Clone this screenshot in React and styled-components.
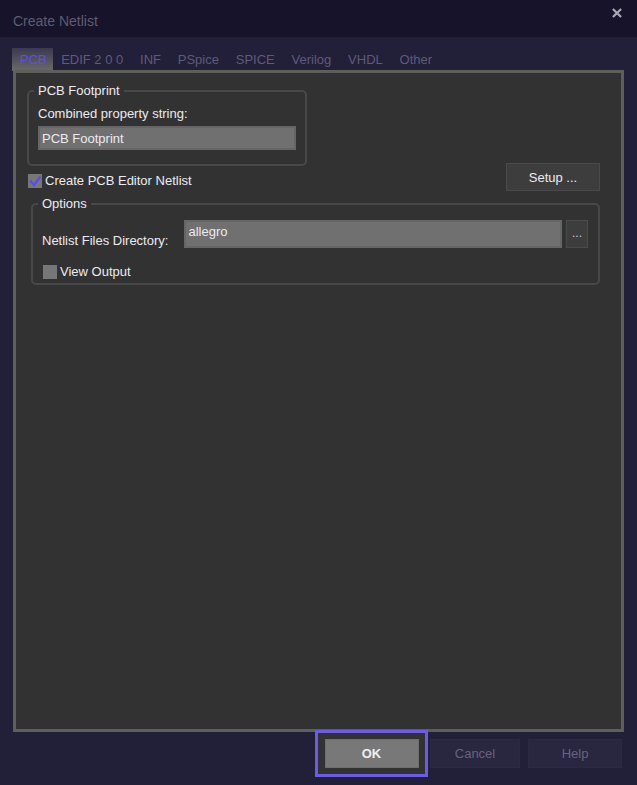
import styled, { createGlobalStyle } from "styled-components";

const GlobalStyle = createGlobalStyle`
  html, body {
    margin: 0;
    padding: 0;
    background: #221f38;
  }
  * {
    box-sizing: border-box;
  }
`;

const Dialog = styled.div`
  width: 637px;
  height: 785px;
  display: flex;
  flex-direction: column;
  background: #221f38;
  font-family: "Liberation Sans", Arial, sans-serif;
  font-size: 13px;
  color: #e4e2ea;
  overflow: hidden;
`;

const TitleBar = styled.div`
  height: 37px;
  flex: none;
  display: flex;
  justify-content: space-between;
  padding: 13px 15px 0 13px;
  background: #16132b;
  color: #5f5b72;
  font-size: 14px;
`;

const Close = styled.svg`
  width: 10px;
  height: 10px;
  margin-top: -5px;
  stroke: #a9a8b3;
  stroke-width: 2.4;
`;

const TabRow = styled.div`
  height: 34px;
  flex: none;
  display: flex;
  align-items: flex-end;
  padding: 11px 0 0 12px;
  margin-bottom: -1px;
`;

const Tab = styled.div`
  height: 23px;
  padding: ${(p) => (p.$active ? "4px 6px 0 8px" : "4px 8.4px 0")};
  color: ${(p) => (p.$active ? "#5b4fe8" : "#5f5a7d")};
  background: ${(p) => (p.$active ? "linear-gradient(#3b3950, #6a6a68)" : "transparent")};
  white-space: nowrap;
`;

const Panel = styled.div`
  height: 662px;
  flex: none;
  margin: 0 13px;
  width: 611px;
  padding: 10px 21px 0 11px;
  background: #323232;
  border: 3px solid #5e5e5a;
`;

const TopRow = styled.div`
  display: flex;
  justify-content: space-between;
  align-items: flex-end;
`;

const Group = styled.fieldset`
  margin: 0;
  padding: 0 9px;
  min-width: 0;
  border: 2px solid #484848;
  border-radius: 5px;

  legend {
    padding: 0 4px;
    margin-left: -4px;
    line-height: 16px;
    color: #ecebf0;
  }
`;

const FootprintGroup = styled(Group)`
  width: 280px;
  height: 83px;
`;

const OptionsGroup = styled(Group)`
  width: 569px;
  height: 89px;
  margin: 7px 0 0 4px;
  padding: 0 10px 0 9px;
`;

const FieldLabel = styled.div`
  line-height: 16px;
  color: #ecebf0;
  white-space: nowrap;
  margin-top: 7px;
`;

const DirLabel = styled(FieldLabel)`
  margin: 14px 16px 0 0;
`;

const Input = styled.input`
  display: block;
  min-width: 0;
  background: #707070;
  border: 2px solid #666666;
  color: #ecebf0;
  font: inherit;
  outline: none;
`;

const FootprintInput = styled(Input)`
  width: 258px;
  height: 24px;
  margin-top: 4px;
  padding: 0 2px;
`;

const DirInput = styled(Input)`
  flex: 1;
  height: 28px;
  padding: 0 2px 5px;
`;

const CheckRow = styled.label`
  display: flex;
  align-items: center;
  gap: ${(p) => p.$gap}px;
  margin: ${(p) => p.$margin};
  line-height: 16px;
  color: #ecebf0;
`;

const CheckBox = styled.span`
  width: 14px;
  height: 14px;
  flex: none;
  background: #777777;
  display: flex;
`;

const DirRow = styled.div`
  display: flex;
  align-items: center;
  margin-top: 7px;
`;

const SmallButton = styled.button`
  width: 22px;
  height: 28px;
  margin-left: 4px;
  padding: 0 0 2px;
  flex: none;
  background: #3d3d3d;
  border: 1px solid #4a4a4a;
  color: #c9c9d0;
  font: inherit;
  font-size: 12px;
`;

const Button = styled.button`
  width: ${(p) => p.$width}px;
  height: 29px;
  flex: none;
  padding: 0;
  font: inherit;
  background: #3d3d3d;
  border: 1px solid #4a4a4a;
  color: #ecebf0;
`;

const SetupButton = styled(Button)`
  height: 28px;
  margin-bottom: -2px;
`;

const PrimaryButton = styled(Button)`
  background: #787878;
  border-color: #6e6e6e;
  color: #f0eff3;
  font-weight: 700;
`;

const DisabledButton = styled(Button)`
  margin-top: 7px;
  background: #29263f;
  border-color: #2c2943;
  color: #67637f;
`;

const Footer = styled.div`
  display: flex;
  align-items: flex-start;
  justify-content: flex-end;
  gap: 8px;
  padding-right: 15px;
`;

const Focus = styled.div`
  width: 113px;
  height: 47px;
  margin: -2px -6px 0 0;
  display: flex;
  align-items: center;
  justify-content: center;
  background: #323232;
  border: 3px solid #6a5ce6;
`;

const tabs = ["PCB", "EDIF 2 0 0", "INF", "PSpice", "SPICE", "Verilog", "VHDL", "Other"];

export default function App() {
  return (
    <Dialog>
      <GlobalStyle />
      <TitleBar>
        <span>Create Netlist</span>
        <Close viewBox="0 0 11 11">
          <path d="M1 1L10 10M10 1L1 10" />
        </Close>
      </TitleBar>
      <TabRow>
        {tabs.map((name) => (
          <Tab key={name} $active={name === "PCB"}>
            {name}
          </Tab>
        ))}
      </TabRow>
      <Panel>
        <TopRow>
          <div>
            <FootprintGroup>
              <legend>PCB Footprint</legend>
              <FieldLabel>Combined property string:</FieldLabel>
              <FootprintInput defaultValue="PCB Footprint" />
            </FootprintGroup>
            <CheckRow $gap={3} $margin="7px 0 0 1px">
              <CheckBox>
                <svg viewBox="0 0 14 14" width="14" height="14">
                  <path d="M2 6.5L6 11L12.5 2.5" fill="none" stroke="#5a4fe6" strokeWidth="2.4" />
                </svg>
              </CheckBox>
              Create PCB Editor Netlist
            </CheckRow>
          </div>
          <SetupButton $width={94}>Setup ...</SetupButton>
        </TopRow>
        <OptionsGroup>
          <legend>Options</legend>
          <DirRow>
            <DirLabel>Netlist Files Directory:</DirLabel>
            <DirInput defaultValue="allegro" />
            <SmallButton>...</SmallButton>
          </DirRow>
          <CheckRow $gap={3} $margin="15px 0 0 1px">
            <CheckBox />
            View Output
          </CheckRow>
        </OptionsGroup>
      </Panel>
      <Footer>
        <Focus>
          <PrimaryButton $width={94}>OK</PrimaryButton>
        </Focus>
        <DisabledButton $width={90}>Cancel</DisabledButton>
        <DisabledButton $width={94}>Help</DisabledButton>
      </Footer>
    </Dialog>
  );
}
